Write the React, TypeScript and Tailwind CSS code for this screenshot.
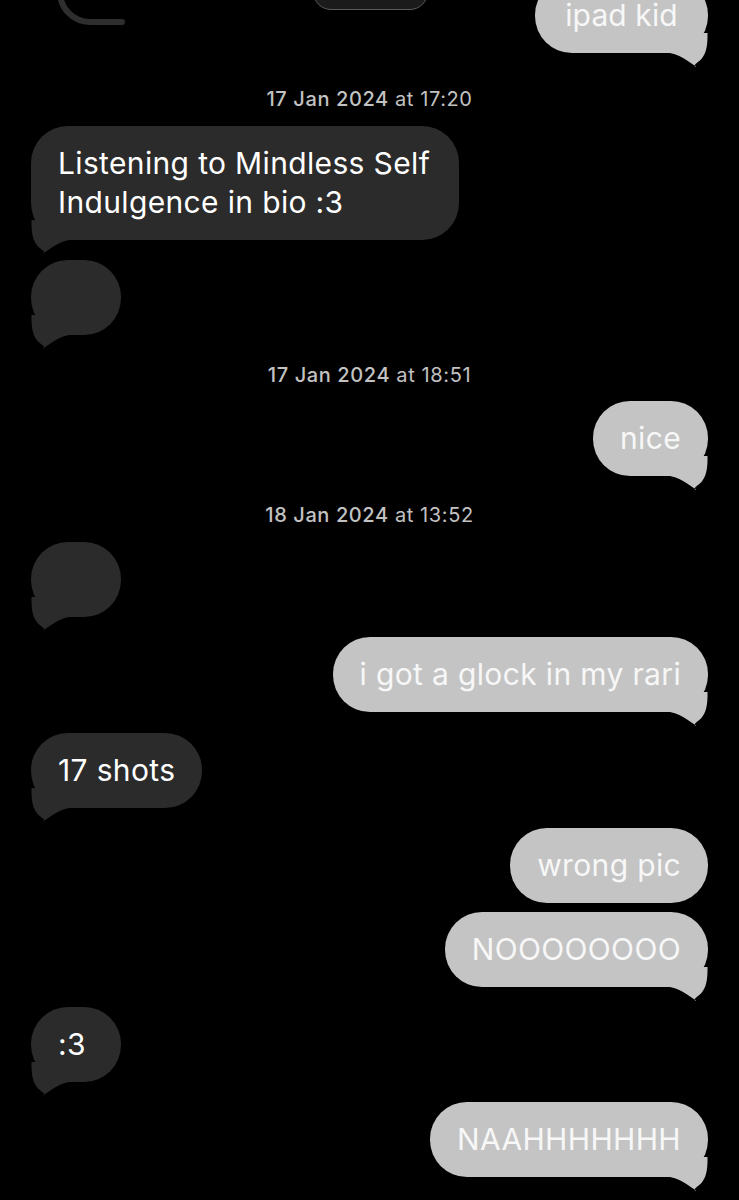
type Side = 'me' | 'them';

interface Item {
    id: string;
    type: 'msg' | 'time';
    side?: Side;
    text?: string;
    date?: string;
    time?: string;
    tail?: boolean;
    mt: string;
}

const items: Item[] = [
    { id: "t1", type: "time", date: "17 Jan 2024", time: "at 17:20", mt: "mt-[34px]" },
    { id: "m1", type: "msg", side: "them", text: "Listening to Mindless Self\nIndulgence in bio :3", tail: true, mt: "mt-[15px]" },
    { id: "m2", type: "msg", side: "them", tail: true, mt: "mt-[20px]" },
    { id: "t2", type: "time", date: "17 Jan 2024", time: "at 18:51", mt: "mt-[28px]" },
    { id: "m3", type: "msg", side: "me", text: "nice", tail: true, mt: "mt-[14px]" },
    { id: "t3", type: "time", date: "18 Jan 2024", time: "at 13:52", mt: "mt-[27px]" },
    { id: "m4", type: "msg", side: "them", tail: true, mt: "mt-[15px]" },
    { id: "m5", type: "msg", side: "me", text: "i got a glock in my rari", tail: true, mt: "mt-[20px]" },
    { id: "m6", type: "msg", side: "them", text: "17 shots", tail: true, mt: "mt-[21px]" },
    { id: "m7", type: "msg", side: "me", text: "wrong pic", tail: false, mt: "mt-[20px]" },
    { id: "m8", type: "msg", side: "me", text: "NOOOOOOOO", tail: true, mt: "mt-[9px]" },
    { id: "m9", type: "msg", side: "them", text: ":3", tail: true, mt: "mt-[20px]" },
    { id: "m10", type: "msg", side: "me", text: "NAAHHHHHHH", tail: true, mt: "mt-[20px]" },
];

// iMessage style tail, drawn for the right side and mirrored for the left
const Tail = ({ side }: { side: Side }) => (
    <svg
        viewBox="0 0 40 34"
        className={side === 'me'
            ? 'absolute right-0 bottom-[-14px] w-[40px] h-[34px] fill-[#c4c4c4]'
            : 'absolute left-0 bottom-[-14px] w-[40px] h-[34px] fill-[#2b2b2b] -scale-x-100'}
    >
        <path d="M2 20 L2 0 L39.5 0 C39.8 13 38 21 33 26.5 C29.5 29.5 27.3 30.8 26.7 32.3 C26.4 33.3 27.3 33.9 28.3 33.5 C23 31 16 23 2 20 Z" />
    </svg>
);

const Bubble = ({ item }: { item: Item }) => {
    const lines = item.text ? item.text.split("\n") : [];
    return (
        <div className={`relative min-w-[90px] rounded-[37px] px-[27px] py-[18px] text-[30px] leading-[39px] tracking-[0.35px] ${item.side === 'me'
            ? 'self-end bg-[#c4c4c4] text-[#f7f7f7] text-center'
            : 'self-start bg-[#2b2b2b] text-white'
            } ${item.id === 'm1' ? 'w-[428px] rounded-[32px] tracking-[0.1px]' : ''} ${item.mt}`}>
            {item.tail && <Tail side={item.side as Side} />}
            <div className="relative">
                {lines.length === 0 && <span>&nbsp;</span>}
                {lines.map((l, i) => (
                    <div key={i}>{l}</div>
                ))}
            </div>
        </div>
    );
};

const Stamp = ({ item }: { item: Item }) => (
    <div className={`self-center text-[20px] leading-[24px] tracking-[0.6px] text-[#c2c2c2] ${item.mt}`}>
        <span className="font-medium">{item.date}</span> <span>{item.time}</span>
    </div>
);

export default function App() {
    return (
        <div className="w-[739px] h-[1200px] overflow-hidden bg-black font-['Inter',_sans-serif]">
            <div className="flex flex-col px-[31px] -mt-[22px]">

                {/* partly scrolled-off row */}
                <div className="flex items-start">
                    <svg viewBox="0 0 70 48" className="w-[70px] h-[48px] ml-[25px]" fill="none">
                        <path d="M4 0 L4 14 A30 30 0 0 0 34 44 L66 44" stroke="#2e2e2e" strokeWidth="6" strokeLinecap="round" />
                    </svg>
                    <div className="w-[115px] h-[60px] -mt-[28px] ml-[187px] rounded-[18px] bg-[#1b1b1b] border-[1.5px] border-[#5c5c5c]"></div>
                    <div className="relative ml-auto w-[173px] rounded-[37px] bg-[#c4c4c4] text-[#f7f7f7] text-center px-[27px] py-[18px] text-[30px] leading-[39px] tracking-[0.1px]">
                        <Tail side="me" />
                        <div className="relative">ipad kid</div>
                    </div>
                </div>

                {items.map((item) => item.type === 'time'
                    ? <Stamp key={item.id} item={item} />
                    : <Bubble key={item.id} item={item} />
                )}
            </div>
        </div>
    );
}
